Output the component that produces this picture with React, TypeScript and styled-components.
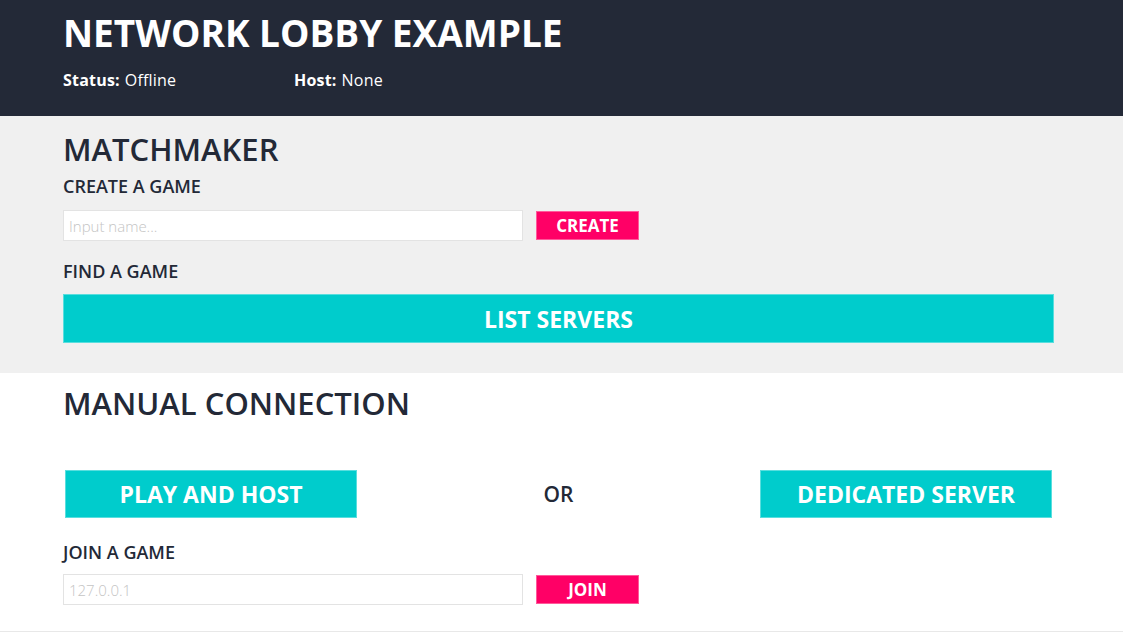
import React from "react";
import styled, { createGlobalStyle } from "styled-components";

const GlobalStyle = createGlobalStyle`
  html, body {
    margin: 0;
    padding: 0;
    background: #ffffff;
    font-family: "Open Sans", "Noto Sans", sans-serif;
    color: #232937;
  }
  * {
    box-sizing: border-box;
  }
`;

const Page = styled.div`
  width: 1123px;
  height: 632px;
  overflow: hidden;
  border-bottom: 1px solid #e8e8e8;
`;

const Header = styled.header`
  background: #232937;
  height: 116px;
  padding: 11px 0 0 63px;
`;

const Title = styled.h1`
  margin: 0;
  font-size: 37px;
  line-height: 44px;
  font-weight: 700;
  color: #ffffff;
`;

const StatusRow = styled.div`
  display: flex;
  margin-top: 15px;
  font-size: 16px;
  line-height: 20px;
  color: #ffffff;
  letter-spacing: 0.2px;
`;

const StatusItem = styled.div`
  width: 231px;
  font-weight: 400;
  b {
    font-weight: 700;
    margin-right: 5px;
  }
`;

const Section = styled.section<{ $bg: string; $top: number }>`
  background: ${(p) => p.$bg};
  padding: ${(p) => p.$top}px 69px 30px 63px;
`;

const SectionTitle = styled.h2`
  margin: 0;
  font-size: 31px;
  line-height: 36px;
  font-weight: 600;
  color: #232937;
`;

const Label = styled.h3<{ $top: number }>`
  margin: ${(p) => p.$top}px 0 0;
  font-size: 18px;
  line-height: 20px;
  font-weight: 600;
  color: #232937;
`;

const InputRow = styled.div<{ $top: number }>`
  display: flex;
  align-items: center;
  gap: 13px;
  margin-top: ${(p) => p.$top}px;
`;

const TextInput = styled.input`
  width: 460px;
  height: 31px;
  border: 1px solid #e3e3e3;
  background: #ffffff;
  padding: 0 5px;
  font-family: "Open Sans", sans-serif;
  font-size: 15px;
  font-weight: 300;
  color: #232937;
  outline: none;
  &::placeholder {
    color: #c4c4c4;
  }
`;

const Button = styled.button`
  border: 1px solid rgba(255, 255, 255, 0.35);
  cursor: pointer;
  color: #ffffff;
  font-family: "Open Sans", sans-serif;
  font-weight: 700;
  padding: 0;
`;

const SmallButton = styled(Button)`
  width: 103px;
  height: 29px;
  background: #ff0066;
  font-size: 17px;
`;

const WideButton = styled(Button)`
  display: block;
  width: 991px;
  height: 49px;
  margin-top: 13px;
  background: #00cccc;
  font-size: 23px;
`;

const ModeRow = styled.div`
  display: flex;
  align-items: center;
  justify-content: space-between;
  margin-top: 49px;
  padding: 0 2px;
`;

const ModeButton = styled(Button)`
  width: 292px;
  height: 48px;
  background: #00cccc;
  font-size: 23px;
`;

const Or = styled.span`
  font-size: 21px;
  font-weight: 600;
  color: #232937;
`;

export default function App() {
  return (
    <>
      <GlobalStyle />
      <Page>
        <Header>
          <Title>NETWORK LOBBY EXAMPLE</Title>
          <StatusRow>
            <StatusItem>
              <b>Status:</b>Offline
            </StatusItem>
            <StatusItem>
              <b>Host:</b>None
            </StatusItem>
          </StatusRow>
        </Header>

        <Section $bg="#f0f0f0" $top={15}>
          <SectionTitle>MATCHMAKER</SectionTitle>
          <Label $top={9}>CREATE A GAME</Label>
          <InputRow $top={14}>
            <TextInput placeholder="Input name..." />
            <SmallButton>CREATE</SmallButton>
          </InputRow>
          <Label $top={20}>FIND A GAME</Label>
          <WideButton>LIST SERVERS</WideButton>
        </Section>

        <Section $bg="#ffffff" $top={12}>
          <SectionTitle>MANUAL CONNECTION</SectionTitle>
          <ModeRow>
            <ModeButton>PLAY AND HOST</ModeButton>
            <Or>OR</Or>
            <ModeButton>DEDICATED SERVER</ModeButton>
          </ModeRow>
          <Label $top={24}>JOIN A GAME</Label>
          <InputRow $top={12}>
            <TextInput placeholder="127.0.0.1" />
            <SmallButton>JOIN</SmallButton>
          </InputRow>
        </Section>
      </Page>
    </>
  );
}
